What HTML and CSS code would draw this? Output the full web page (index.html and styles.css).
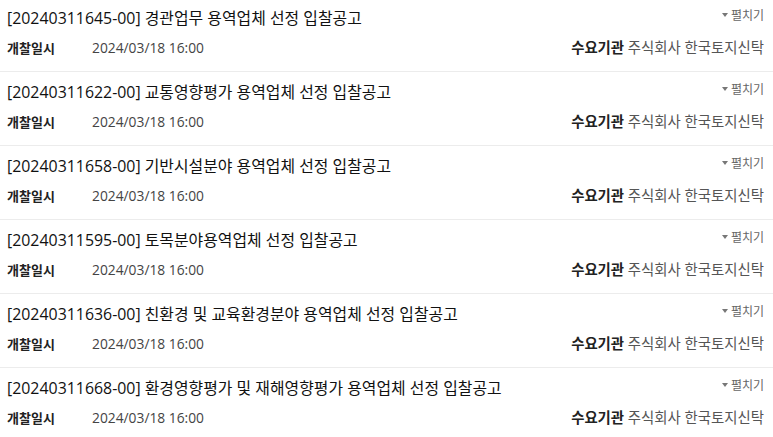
FILE: index.html
```html
<!DOCTYPE html>
<html lang="ko">
<head>
<meta charset="utf-8">
<link rel="stylesheet" href="styles.css">
</head>
<body>
<ul class="bid-list">
  <li class="bid">
    <div class="bid-top">
      <a class="bid-title">[20240311645-00] 경관업무 용역업체 선정 입찰공고</a>
      <span class="toggle"><span class="caret"></span>펼치기</span>
    </div>
    <div class="bid-meta">
      <div class="meta-left"><span class="label">개찰일시</span><span class="date">2024/03/18 16:00</span></div>
      <div class="meta-right"><span class="label">수요기관</span> <span class="org">주식회사 한국토지신탁</span></div>
    </div>
  </li>
  <li class="bid">
    <div class="bid-top">
      <a class="bid-title">[20240311622-00] 교통영향평가 용역업체 선정 입찰공고</a>
      <span class="toggle"><span class="caret"></span>펼치기</span>
    </div>
    <div class="bid-meta">
      <div class="meta-left"><span class="label">개찰일시</span><span class="date">2024/03/18 16:00</span></div>
      <div class="meta-right"><span class="label">수요기관</span> <span class="org">주식회사 한국토지신탁</span></div>
    </div>
  </li>
  <li class="bid">
    <div class="bid-top">
      <a class="bid-title">[20240311658-00] 기반시설분야 용역업체 선정 입찰공고</a>
      <span class="toggle"><span class="caret"></span>펼치기</span>
    </div>
    <div class="bid-meta">
      <div class="meta-left"><span class="label">개찰일시</span><span class="date">2024/03/18 16:00</span></div>
      <div class="meta-right"><span class="label">수요기관</span> <span class="org">주식회사 한국토지신탁</span></div>
    </div>
  </li>
  <li class="bid">
    <div class="bid-top">
      <a class="bid-title">[20240311595-00] 토목분야용역업체 선정 입찰공고</a>
      <span class="toggle"><span class="caret"></span>펼치기</span>
    </div>
    <div class="bid-meta">
      <div class="meta-left"><span class="label">개찰일시</span><span class="date">2024/03/18 16:00</span></div>
      <div class="meta-right"><span class="label">수요기관</span> <span class="org">주식회사 한국토지신탁</span></div>
    </div>
  </li>
  <li class="bid">
    <div class="bid-top">
      <a class="bid-title">[20240311636-00] 친환경 및 교육환경분야 용역업체 선정 입찰공고</a>
      <span class="toggle"><span class="caret"></span>펼치기</span>
    </div>
    <div class="bid-meta">
      <div class="meta-left"><span class="label">개찰일시</span><span class="date">2024/03/18 16:00</span></div>
      <div class="meta-right"><span class="label">수요기관</span> <span class="org">주식회사 한국토지신탁</span></div>
    </div>
  </li>
  <li class="bid">
    <div class="bid-top">
      <a class="bid-title">[20240311668-00] 환경영향평가 및 재해영향평가 용역업체 선정 입찰공고</a>
      <span class="toggle"><span class="caret"></span>펼치기</span>
    </div>
    <div class="bid-meta">
      <div class="meta-left"><span class="label">개찰일시</span><span class="date">2024/03/18 16:00</span></div>
      <div class="meta-right"><span class="label">수요기관</span> <span class="org">주식회사 한국토지신탁</span></div>
    </div>
  </li>
</ul>
</body>
</html>
```

FILE: styles.css
```css
html, body {
  margin: 0;
  padding: 0;
  background: #fff;
}
body {
  font-family: "Open Sans", "Noto Sans CJK KR", sans-serif;
  color: #222;
  overflow: hidden;
}
.bid-list {
  list-style: none;
  margin: 0;
  padding: 0;
}
.bid {
  padding: 10px 9px 13px 7px;
  border-bottom: 1px solid #ececec;
}
.bid:first-child {
  padding-top: 8px;
}
.bid-top {
  display: flex;
  justify-content: space-between;
  align-items: center;
  height: 20px;
}
.bid-title {
  font-size: 15.9px;
  line-height: 20px;
  color: #111;
}
.toggle {
  font-size: 12px;
  color: #666;
  display: flex;
  align-items: center;
  gap: 3px;
  margin-top: -6px;
}
.caret {
  width: 0;
  height: 0;
  border-left: 3px solid transparent;
  border-right: 3px solid transparent;
  border-top: 4px solid #777;
}
.bid-meta {
  display: flex;
  justify-content: space-between;
  align-items: center;
  margin-top: 10px;
  height: 20px;
  line-height: 20px;
}
.meta-left {
  display: flex;
  font-size: 13px;
}
.label {
  font-weight: 700;
  color: #222;
}
.meta-left .label {
  width: 85px;
}
.date {
  color: #444;
  font-size: 13.8px;
}
.meta-right {
  font-size: 14.4px;
}
.org {
  color: #555;
}
```
